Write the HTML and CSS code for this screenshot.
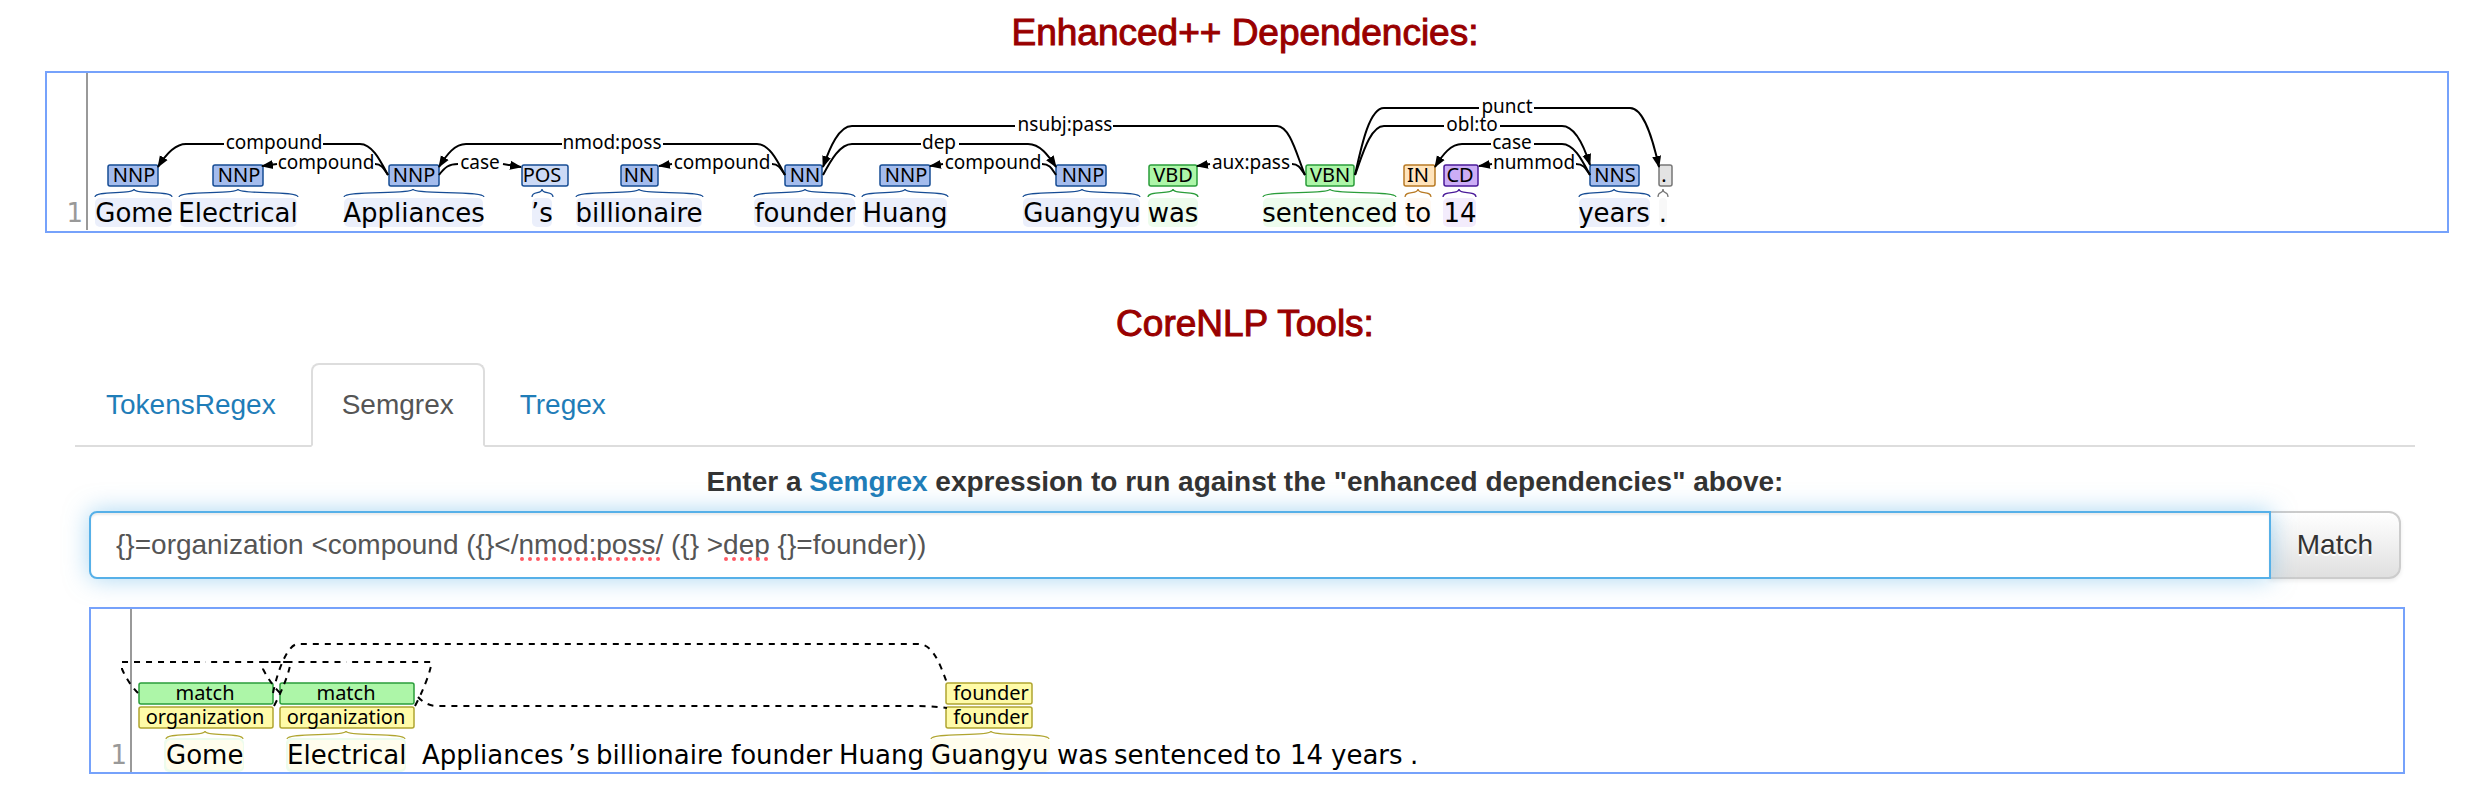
FILE: index.html
```html
<!DOCTYPE html>
<html lang="en">
<head>
<meta charset="utf-8">
<title>CoreNLP</title>
<link rel="stylesheet" href="styles.css">
</head>
<body>
<main class="page">
  <section>
    <h2 class="title">Enhanced++ Dependencies:</h2>
    <div class="panel">
      <svg class="graph graph-deps" role="img" aria-label="Enhanced++ dependency graph">
        <defs>
          <marker id="arrow" class="arrow" markerUnits="userSpaceOnUse" markerWidth="12" markerHeight="10" refX="11" refY="5" orient="auto"><path d="M0 0.5 L12 5 L0 9.5 Z"/></marker>
        </defs>
        <path class="gutter" d="M40 0V157"/>
        <text class="num" x="36" y="149">1</text>

        <g class="noun">
          <rect class="hl" x="48" y="125" width="77" height="29" rx="5"/>
          <rect class="hl" x="133" y="125" width="117" height="29" rx="5"/>
          <rect class="hl" x="297" y="125" width="139" height="29" rx="5"/>
          <rect class="hl" x="485" y="125" width="20" height="29" rx="5"/>
          <rect class="hl" x="529" y="125" width="126" height="29" rx="5"/>
          <rect class="hl" x="707" y="125" width="101" height="29" rx="5"/>
          <rect class="hl" x="816" y="125" width="84" height="29" rx="5"/>
          <rect class="hl" x="976" y="125" width="117" height="29" rx="5"/>
          <rect class="hl" x="1532" y="125" width="71" height="29" rx="5"/>
          <path class="curly" d="M48 124C48 117 87 122 87 116C87 122 125 117 125 124"/>
          <path class="curly" d="M132 124C132 117 191 122 191 116C191 122 251 117 251 124"/>
          <path class="curly" d="M297 124C297 117 366 122 366 116C366 122 437 117 437 124"/>
          <path class="curly" d="M485 124C485 117 495 122 495 116C495 122 506 117 506 124"/>
          <path class="curly" d="M529 124C529 117 592 122 592 116C592 122 656 117 656 124"/>
          <path class="curly" d="M707 124C707 117 758 122 758 116C758 122 808 117 808 124"/>
          <path class="curly" d="M815 124C815 117 858 122 858 116C858 122 901 117 901 124"/>
          <path class="curly" d="M976 124C976 117 1035 122 1035 116C1035 122 1093 117 1093 124"/>
          <path class="curly" d="M1532 124C1532 117 1567 122 1567 116C1567 122 1603 117 1603 124"/>
          <rect class="tag" x="61" y="92" width="50" height="21" rx="2"/>
          <rect class="tag" x="166" y="92" width="50" height="21" rx="2"/>
          <rect class="tag" x="342" y="92" width="50" height="21" rx="2"/>
          <rect class="tag pos" x="475" y="92" width="46" height="21" rx="2"/>
          <rect class="tag" x="574" y="92" width="37" height="21" rx="2"/>
          <rect class="tag" x="738" y="92" width="37" height="21" rx="2"/>
          <rect class="tag" x="833" y="92" width="50" height="21" rx="2"/>
          <rect class="tag" x="1009" y="92" width="50" height="21" rx="2"/>
          <rect class="tag" x="1543" y="92" width="49" height="21" rx="2"/>
        </g>
        <g class="verb">
          <rect class="hl" x="1101" y="125" width="50" height="29" rx="5"/>
          <rect class="hl" x="1216" y="125" width="133" height="29" rx="5"/>
          <path class="curly" d="M1101 124C1101 117 1126 122 1126 116C1126 122 1151 117 1151 124"/>
          <path class="curly" d="M1216 124C1216 117 1283 122 1283 116C1283 122 1349 117 1349 124"/>
          <rect class="tag" x="1102" y="92" width="48" height="21" rx="2"/>
          <rect class="tag" x="1259" y="92" width="48" height="21" rx="2"/>
        </g>
        <g class="prep">
          <rect class="hl" x="1358" y="125" width="26" height="29" rx="5"/>
          <path class="curly" d="M1358 124C1358 117 1371 122 1371 116C1371 122 1384 117 1384 124"/>
          <rect class="tag" x="1357" y="92" width="31" height="21" rx="2"/>
        </g>
        <g class="card">
          <rect class="hl" x="1396" y="125" width="33" height="29" rx="5"/>
          <path class="curly" d="M1396 124C1396 117 1412 122 1412 116C1412 122 1429 117 1429 124"/>
          <rect class="tag" x="1397" y="92" width="34" height="21" rx="2"/>
        </g>
        <g class="punct">
          <rect class="hl" x="1612" y="125" width="8" height="29" rx="4"/>
          <path class="curly" d="M1611 124C1611 117 1616 122 1616 116C1616 122 1621 117 1621 124"/>
          <rect class="tag" x="1612" y="92" width="13" height="21" rx="2"/>
        </g>

        <g class="tag-text">
          <text x="87" y="109">NNP</text>
          <text x="192" y="109">NNP</text>
          <text x="367" y="109">NNP</text>
          <text x="495" y="109">POS</text>
          <text x="592" y="109">NN</text>
          <text x="758" y="109">NN</text>
          <text x="859" y="109">NNP</text>
          <text x="1036" y="109">NNP</text>
          <text x="1126" y="109">VBD</text>
          <text x="1283" y="109">VBN</text>
          <text x="1371" y="109">IN</text>
          <text x="1413" y="109">CD</text>
          <text x="1568" y="109">NNS</text>
          <text x="1617" y="109">.</text>
        </g>

        <g class="arc">
          <path d="M341 102C333 87 325 71 313 71H276"/>
          <path class="head" d="M177 71H139C128 71 119 81 111 94"/>
          <path d="M341 102C337 96 335 91 328 91"/>
          <path class="head" d="M230 91L215 93"/>
          <path d="M738 102C730 87 722 71 710 71H616"/>
          <path class="head" d="M515 71H419C408 71 400 81 392 94"/>
          <path d="M392 102C398 94 402 91 411 91"/>
          <path class="head" d="M456 91L474 94"/>
          <path d="M738 102C734 96 732 91 725 91"/>
          <path class="head" d="M625 91L612 93"/>
          <path d="M1258 102C1250 83 1243 53 1230 53H1066"/>
          <path class="head" d="M968 53H805C792 53 783 74 776 94"/>
          <path d="M776 102C784 87 793 71 805 71H874"/>
          <path class="head" d="M912 71H981C993 71 1001 82 1009 94"/>
          <path d="M1009 102C1005 96 1003 91 995 91"/>
          <path class="head" d="M896 91L883 93"/>
          <path d="M1258 102C1254 96 1252 91 1245 91"/>
          <path class="head" d="M1163 91L1150 93"/>
          <path d="M1308 102C1314 75 1322 35 1337 35H1432"/>
          <path class="head" d="M1487 35H1583C1597 35 1606 67 1612 94"/>
          <path d="M1308 102C1315 83 1323 53 1337 53H1397"/>
          <path class="head" d="M1453 53H1515C1528 53 1537 73 1543 92"/>
          <path d="M1543 102C1535 87 1527 71 1515 71H1487"/>
          <path class="head" d="M1444 71H1415C1404 71 1396 81 1388 94"/>
          <path d="M1543 102C1539 96 1537 91 1529 91"/>
          <path class="head" d="M1445 91L1432 93"/>
        </g>

        <g class="arc-text">
          <text x="227" y="76">compound</text>
          <text x="279" y="96">compound</text>
          <text x="565" y="76">nmod:poss</text>
          <text x="433" y="96">case</text>
          <text x="675" y="96">compound</text>
          <text x="1018" y="58">nsubj:pass</text>
          <text x="892" y="76">dep</text>
          <text x="946" y="96">compound</text>
          <text x="1204" y="96">aux:pass</text>
          <text x="1460" y="40">punct</text>
          <text x="1425" y="58">obl:to</text>
          <text x="1465" y="76">case</text>
          <text x="1487" y="96">nummod</text>
        </g>

        <g class="words centered">
          <text x="87" y="149">Gome</text>
          <text x="191" y="149">Electrical</text>
          <text x="367" y="149">Appliances</text>
          <text x="495" y="149">’s</text>
          <text x="592" y="149">billionaire</text>
          <text x="758" y="149">founder</text>
          <text x="858" y="149">Huang</text>
          <text x="1035" y="149">Guangyu</text>
          <text x="1126" y="149">was</text>
          <text x="1283" y="149">sentenced</text>
          <text x="1371" y="149">to</text>
          <text x="1413" y="149">14</text>
          <text x="1567" y="149">years</text>
          <text x="1616" y="149">.</text>
        </g>
      </svg>
    </div>
  </section>

  <section class="tools">
    <h2 class="title">CoreNLP Tools:</h2>
    <nav class="tabs">
      <a class="tab" href="#tokensregex">TokensRegex</a>
      <a class="tab active" href="#semgrex" aria-current="page">Semgrex</a>
      <a class="tab" href="#tregex">Tregex</a>
    </nav>
    <div class="tab-content" id="semgrex">
      <label class="prompt" for="expr">Enter a <a class="link" href="#semgrex-docs">Semgrex</a> expression to run against the "enhanced dependencies" above:</label>
      <form class="query">
        <div class="field">
          <input class="input" id="expr" type="text" spellcheck="false" value="{}=organization &lt;compound ({}&lt;/nmod:poss/ ({} &gt;dep {}=founder))">
          <svg class="spelling" aria-hidden="true"><path d="M433 48H570M637 48H682"/></svg>
        </div>
        <button class="button" type="button">Match</button>
      </form>
      <div class="panel">
        <svg class="graph graph-match" role="img" aria-label="Semgrex matches">
          <path class="gutter" d="M40 0V163"/>
          <text class="num" x="36" y="155">1</text>

          <g class="verb">
            <rect class="hl" x="73" y="129" width="80" height="34" rx="5"/>
            <rect class="hl" x="195" y="129" width="120" height="34" rx="5"/>
            <rect class="tag" x="48" y="74" width="134" height="21" rx="2"/>
            <rect class="tag" x="189" y="74" width="134" height="21" rx="2"/>
          </g>
          <g class="named">
            <rect class="hl" x="75" y="131" width="77" height="30" rx="5"/>
            <rect class="hl" x="197" y="131" width="117" height="30" rx="5"/>
            <rect class="hl" x="839" y="129" width="120" height="34" rx="5"/>
            <path class="curly" d="M75 130C75 123 114 128 114 122C114 128 152 123 152 130"/>
            <path class="curly" d="M196 130C196 123 255 128 255 122C255 128 314 123 314 130"/>
            <path class="curly" d="M840 130C840 123 900 128 900 122C900 128 958 123 958 130"/>
            <rect class="tag" x="48" y="98" width="134" height="21" rx="2"/>
            <rect class="tag" x="189" y="98" width="134" height="21" rx="2"/>
            <rect class="tag" x="855" y="74" width="86" height="21" rx="2"/>
            <rect class="tag" x="855" y="98" width="86" height="21" rx="2"/>
          </g>
          <g class="tag-text">
            <text x="114" y="91">match</text>
            <text x="114" y="115">organization</text>
            <text x="255" y="91">match</text>
            <text x="255" y="115">organization</text>
            <text x="900" y="91">founder</text>
            <text x="900" y="115">founder</text>
          </g>
          <g class="arc dashed">
            <path d="M47 84Q37 74 31 60V53H114"/>
            <path d="M183 97Q195 74 199 57V53H114"/>
            <path d="M189 84Q179 74 172 60V53H255"/>
            <path d="M324 97Q336 74 340 57V53H255"/>
            <path d="M182 84C187 60 197 35 207 35H827C842 35 849 55 856 74"/>
            <path d="M327 88Q335 97 347 97H827Q842 97 856 99"/>
          </g>
          <g class="words">
            <text x="75" y="155">Gome</text>
            <text x="196" y="155">Electrical</text>
            <text x="331" y="155">Appliances</text>
            <text x="477" y="155">’s</text>
            <text x="505" y="155">billionaire</text>
            <text x="640" y="155">founder</text>
            <text x="748" y="155">Huang</text>
            <text x="840" y="155">Guangyu</text>
            <text x="966" y="155">was</text>
            <text x="1023" y="155">sentenced</text>
            <text x="1164" y="155">to</text>
            <text x="1199" y="155">14</text>
            <text x="1240" y="155">years</text>
            <text x="1319" y="155">.</text>
          </g>
        </svg>
      </div>
    </div>
  </section>
</main>
</body>
</html>
```
FILE: styles.css
```css
body {
  margin: 0;
  background: #fff;
  color: #333;
  font: 28px/40px "Liberation Sans", Arial, sans-serif;
}

.page { padding: 13px 35px 20px 45px; }

.title {
  margin: 0 0 18px;
  color: #990000;
  font-size: 37px;
  font-weight: 400;
  line-height: 40px;
  text-align: center;
  -webkit-text-stroke: 1px #990000;
}

.tools { margin-top: 71px; }

.panel {
  width: 100%;
  border: 2px solid #76a2fb;
}

.tabs {
  display: flex;
  gap: 4px;
  margin: 19px 30px 0;
  border-bottom: 2px solid #ddd;
}

.tab {
  margin-bottom: -2px;
  padding: 20px 29px;
  border: 2px solid transparent;
  border-radius: 8px 8px 0 0;
  color: #1f7db8;
  text-decoration: none;
}

.tab.active {
  border-color: #ddd #ddd #fff;
  background: #fff;
  color: #555;
}

.tab-content { padding: 15px 44px 0; }

.prompt {
  display: block;
  margin-bottom: 9px;
  font-weight: 700;
  text-align: center;
}

.link {
  color: #1f7db8;
  text-decoration: none;
}

.query {
  display: flex;
  margin-bottom: 28px;
}

.field {
  position: relative;
  z-index: 1;
  flex: 1;
}

.input {
  box-sizing: border-box;
  display: block;
  width: 100%;
  height: 68px;
  padding: 0 25px;
  border: 2px solid #56b0e8;
  border-radius: 8px 0 0 8px;
  outline: 0;
  background: #fff;
  box-shadow: inset 0 2px 2px rgba(0, 0, 0, .08), 0 0 24px rgba(86, 176, 232, .5);
  color: #555;
  font: inherit;
}

.spelling {
  position: absolute;
  inset: 0;
  width: 100%;
  height: 100%;
  pointer-events: none;
  fill: none;
  stroke: #ff5a64;
  stroke-width: 4;
  stroke-linecap: round;
  stroke-dasharray: 0 8;
}

.button {
  margin-left: -2px;
  padding: 0 26px;
  border: 2px solid #ccc;
  border-radius: 0 12px 12px 0;
  background: linear-gradient(#fff, #e0e0e0);
  box-shadow: 0 2px 4px rgba(0, 0, 0, .08);
  color: #333;
  font: inherit;
  text-shadow: 0 2px 0 #fff;
}

.graph {
  display: block;
  width: 100%;
}

.graph-deps { height: 158px; }
.graph-match { height: 163px; }

.gutter { stroke: #999; stroke-width: 2; }

.num,
.words { font: 26px "DejaVu Sans", Verdana, sans-serif; }
.num { fill: #999; text-anchor: end; }
.words { fill: #000; }
.centered,
.tag-text,
.arc-text { text-anchor: middle; }
.tag-text { font: 20px "Noto Sans", sans-serif; fill: #000; }
.arc-text { font: 19px "Noto Sans", sans-serif; fill: #000; }

.tag { stroke-width: 1.5; }
.curly { fill: none; stroke-width: 1.25; }

.noun { stroke: #164c94; }
.noun .tag { fill: #a4bced; }
.noun .pos { fill: #ccdaf6; }
.verb { stroke: #2a9d3a; }
.verb .tag { fill: #adf6a8; }
.prep { stroke: #b87a24; }
.prep .tag { fill: #ffe4bc; }
.card { stroke: #4a1a99; }
.card .tag { fill: #ccadf6; }
.punct { stroke: #777; }
.punct .tag { fill: #e3e3e3; }
.named { stroke: #b0a530; }
.named .tag { fill: #fffba8; }

.hl { stroke: none; }
.noun .hl { fill: #ebeffb; }
.verb .hl { fill: #edfced; }
.prep .hl { fill: #fff9f2; }
.card .hl { fill: #f3ecfc; }
.punct .hl { fill: #f8f8f8; }
.named .hl { fill: #fffded; }

.arc { fill: none; stroke: #000; stroke-width: 2; }
.head { marker-end: url(#arrow); }
.arrow { fill: #000; stroke: none; }
.dashed { stroke-dasharray: 6 6; }
```
